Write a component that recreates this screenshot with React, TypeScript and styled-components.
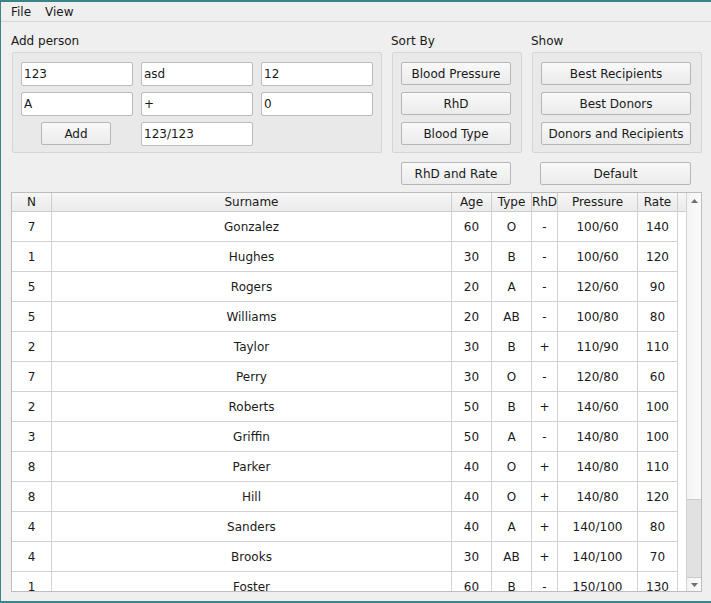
import React from 'react';
import styled, { createGlobalStyle } from 'styled-components';

const GlobalStyle = createGlobalStyle`
  html, body { margin: 0; padding: 0; background: #3a8585; }
  body {
    font-family: "DejaVu Sans", "Noto Sans", sans-serif;
    font-size: 12px;
    color: #1a1a1a;
  }
  * { box-sizing: border-box; }
`;

const Window = styled.div`
  margin: 2px 0 0 1px;
  width: 710px;
  height: 599px;
  background: #efefef;
  display: flex;
  flex-direction: column;
  overflow: hidden;
`;

const MenuBar = styled.div`
  height: 20px;
  display: flex;
  align-items: center;
  padding-left: 3px;
  border-bottom: 1px solid #d6d6d6;
`;

const MenuItem = styled.span`
  padding: 1px 7px 0;
  line-height: 18px;
`;

const Main = styled.div`
  padding: 12px 9px 0 10px;
  display: flex;
  flex-direction: column;
`;

const TopRow = styled.div`
  display: flex;
  gap: 9px;
`;

const Column = styled.div<{ $w: number }>`
  width: ${(p) => p.$w}px;
  display: flex;
  flex-direction: column;
`;

const Label = styled.div`
  line-height: 14px;
  height: 14px;
  margin-bottom: 4px;
`;

const Group = styled.div<{ $w: number; $cols: string }>`
  margin-left: 1px;
  width: ${(p) => p.$w}px;
  height: 101px;
  border: 1px solid #d5d5d5;
  border-radius: 2px;
  background: #e9e9e9;
  padding: 9px 8px;
  display: grid;
  grid-template-columns: ${(p) => p.$cols};
  grid-auto-rows: 24px;
  column-gap: 8px;
  row-gap: 6px;
  align-items: start;
`;

const Input = styled.div`
  height: 24px;
  background: #ffffff;
  border: 1px solid #bcbcbc;
  border-radius: 2px;
  padding-left: 2px;
  display: flex;
  align-items: center;
`;

const Button = styled.div<{ $w?: number; $ml?: number }>`
  height: 23px;
  width: ${(p) => (p.$w ? `${p.$w}px` : 'auto')};
  margin-left: ${(p) => p.$ml ?? 0}px;
  border: 1px solid #b6b6b6;
  border-radius: 2px;
  background: linear-gradient(#f9f9f9, #ebebeb);
  display: flex;
  align-items: center;
  justify-content: center;
  white-space: nowrap;
`;

const ActionRow = styled.div`
  display: flex;
  margin-top: 9px;
`;

const TableFrame = styled.div`
  margin-top: 7px;
  width: 691px;
  height: 400px;
  border: 1px solid #bdbdbd;
  background: #ffffff;
  display: flex;
`;

const Viewport = styled.div`
  flex: 1;
  display: flex;
  flex-direction: column;
  overflow: hidden;
`;

const COLS = '40px 400px 40px 40px 26px 80px 40px';

const HeaderRow = styled.div`
  display: grid;
  grid-template-columns: ${COLS} 8px;
  height: 19px;
  flex-shrink: 0;
  border-bottom: 1px solid #cdcdcd;
  background: linear-gradient(#f6f6f6, #ebebeb);
`;

const HeaderCell = styled.div<{ $last?: boolean }>`
  border-right: ${(p) => (p.$last ? 'none' : '1px solid #cdcdcd')};
  display: flex;
  align-items: center;
  justify-content: center;
  line-height: 18px;
  white-space: nowrap;
  overflow: hidden;
`;

const BodyRow = styled.div`
  display: grid;
  grid-template-columns: ${COLS};
  height: 30px;
  flex-shrink: 0;
`;

const Cell = styled.div`
  border-right: 1px solid #d2d2d2;
  border-bottom: 1px solid #d2d2d2;
  display: flex;
  align-items: center;
  justify-content: center;
  white-space: nowrap;
`;

const ScrollBar = styled.div`
  width: 15px;
  border-left: 1px solid #d3d3d3;
  background: linear-gradient(to right, #f3f3f3, #fbfbfb);
  display: flex;
  flex-direction: column;
`;

const ArrowBox = styled.div<{ $h: number }>`
  height: ${(p) => p.$h}px;
  display: flex;
  align-items: center;
  justify-content: center;
`;

const Track = styled.div`
  flex: 1;
  display: flex;
  flex-direction: column;
  justify-content: flex-end;
`;

const Handle = styled.div`
  height: 79px;
  background: #e1e1e1;
  border-top: 1px solid #cbcbcb;
  border-bottom: 1px solid #cbcbcb;
`;

const rows: [string, string, string, string, string, string, string][] = [
  ['7', 'Gonzalez', '60', 'O', '-', '100/60', '140'],
  ['1', 'Hughes', '30', 'B', '-', '100/60', '120'],
  ['5', 'Rogers', '20', 'A', '-', '120/60', '90'],
  ['5', 'Williams', '20', 'AB', '-', '100/80', '80'],
  ['2', 'Taylor', '30', 'B', '+', '110/90', '110'],
  ['7', 'Perry', '30', 'O', '-', '120/80', '60'],
  ['2', 'Roberts', '50', 'B', '+', '140/60', '100'],
  ['3', 'Griffin', '50', 'A', '-', '140/80', '100'],
  ['8', 'Parker', '40', 'O', '+', '140/80', '110'],
  ['8', 'Hill', '40', 'O', '+', '140/80', '120'],
  ['4', 'Sanders', '40', 'A', '+', '140/100', '80'],
  ['4', 'Brooks', '30', 'AB', '+', '140/100', '70'],
  ['1', 'Foster', '60', 'B', '-', '150/100', '130'],
];

const headers = ['N', 'Surname', 'Age', 'Type', 'RhD', 'Pressure', 'Rate'];

const Arrow = ({ up }: { up?: boolean }) => (
  <svg width="7" height="4" viewBox="0 0 7 4">
    <polygon points={up ? '0,4 7,4 3.5,0' : '0,0 7,0 3.5,4'} fill="#6f6f6f" />
  </svg>
);

export default function App() {
  return (
    <>
      <GlobalStyle />
      <Window>
        <MenuBar>
          <MenuItem>File</MenuItem>
          <MenuItem>View</MenuItem>
        </MenuBar>
        <Main>
          <TopRow>
            <Column $w={371}>
              <Label>Add person</Label>
              <Group $w={370} $cols="repeat(3, 112px)">
                <Input>123</Input>
                <Input>asd</Input>
                <Input>12</Input>
                <Input>A</Input>
                <Input>+</Input>
                <Input>0</Input>
                <Button $w={70} $ml={20}>Add</Button>
                <Input>123/123</Input>
              </Group>
            </Column>
            <Column $w={131}>
              <Label>Sort By</Label>
              <Group $w={130} $cols="110px">
                <Button>Blood Pressure</Button>
                <Button>RhD</Button>
                <Button>Blood Type</Button>
              </Group>
            </Column>
            <Column $w={171}>
              <Label>Show</Label>
              <Group $w={170} $cols="150px">
                <Button>Best Recipients</Button>
                <Button>Best Donors</Button>
                <Button>Donors and Recipients</Button>
              </Group>
            </Column>
          </TopRow>
          <ActionRow>
            <Button $w={110} $ml={390}>RhD and Rate</Button>
            <Button $w={151} $ml={29}>Default</Button>
          </ActionRow>
          <TableFrame>
            <Viewport>
              <HeaderRow>
                {headers.map((h) => (
                  <HeaderCell key={h}>{h}</HeaderCell>
                ))}
                <HeaderCell $last />
              </HeaderRow>
              {rows.map((r, i) => (
                <BodyRow key={i}>
                  {r.map((c, j) => (
                    <Cell key={j}>{c}</Cell>
                  ))}
                </BodyRow>
              ))}
            </Viewport>
            <ScrollBar>
              <ArrowBox $h={15}>
                <Arrow up />
              </ArrowBox>
              <Track>
                <Handle />
              </Track>
              <ArrowBox $h={13}>
                <Arrow />
              </ArrowBox>
            </ScrollBar>
          </TableFrame>
        </Main>
      </Window>
    </>
  );
}
